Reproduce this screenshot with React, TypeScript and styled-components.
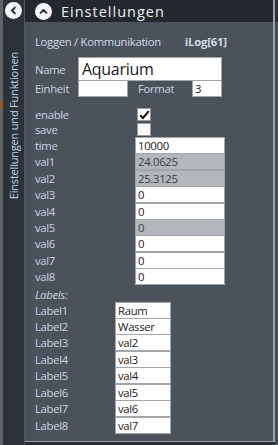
import styled, { createGlobalStyle } from "styled-components";

const GlobalStyle = createGlobalStyle`
  html, body {
    margin: 0;
    padding: 0;
    background: #2a2f35;
    overflow: hidden;
  }
  body {
    font-family: "Open Sans", "Noto Sans", sans-serif;
  }
`;

const Root = styled.div`
  display: flex;
  width: 278px;
  height: 445px;
  background: #2a2f35;
`;

const EdgeStrip = styled.div`
  width: 3px;
  background: linear-gradient(
    to bottom,
    #5f6366 0,
    #5f6366 100px,
    #8a5a2c 100px,
    #8a5a2c 110px,
    #5f6366 110px
  );
`;

const Sidebar = styled.div`
  width: 21px;
  background: #2b323a;
  border-right: 1px solid #515860;
  display: flex;
  flex-direction: column;
  align-items: center;
  padding-top: 2px;
`;

const VerticalLabel = styled.div`
  writing-mode: vertical-rl;
  transform: rotate(180deg);
  margin-top: 33px;
  font-size: 11px;
  color: #c8d6e4;
  white-space: nowrap;
  letter-spacing: -0.2px;
`;

const Circle = styled.div`
  width: 17px;
  height: 17px;
  border-radius: 50%;
  background: #f4f5f6;
  display: flex;
  align-items: center;
  justify-content: center;
  flex-shrink: 0;
`;

const Panel = styled.div`
  width: 248px;
  height: 441px;
  display: flex;
  flex-direction: column;
  background: #4b525a;
  border-right: 2px solid #9ba1a6;
  border-bottom: 1px solid #9ba1a6;
`;

const RightStrip = styled.div`
  width: 3px;
  background: linear-gradient(to bottom, #2a2f35 0, #2a2f35 22px, #474d54 22px);
`;

const Header = styled.div`
  height: 22px;
  background: #22282d;
  display: flex;
  align-items: center;
  padding-left: 10px;
  gap: 9px;
`;

const Title = styled.div`
  font-size: 14.5px;
  color: #f0f2f4;
  letter-spacing: 1px;
`;

const Body = styled.div`
  padding: 11px 0 0 10px;
  display: flex;
  flex-direction: column;
  color: #c9d5e1;
  font-size: 11.3px;
  letter-spacing: -0.3px;
`;

const TopLine = styled.div`
  display: flex;
  height: 16px;
  align-items: center;
  color: #d3dce5;
`;

const Bold = styled.span`
  font-weight: 700;
  margin-left: 24px;
  letter-spacing: -0.2px;
`;

const Row = styled.div<{ $label: number; $h: number }>`
  display: grid;
  grid-template-columns: ${(p) => p.$label}px auto;
  height: ${(p) => p.$h}px;
  align-items: center;
`;

const Field = styled.input<{ $w: number; $disabled?: boolean; $big?: boolean }>`
  box-sizing: border-box;
  width: ${(p) => p.$w}px;
  height: 100%;
  margin: 0;
  border: 1px solid #a3a6a9;
  border-radius: 0;
  padding: 0 0 0 ${(p) => (p.$big ? 3 : 2)}px;
  background: ${(p) => (p.$disabled ? "#b3b7bb" : "#ffffff")};
  color: ${(p) => (p.$disabled ? "#3a3d40" : "#1a1a1a")};
  font-family: "Open Sans", "Noto Sans", sans-serif;
  font-size: ${(p) => (p.$big ? 16 : 11.3)}px;
  outline: none;
  letter-spacing: -0.3px;
`;

const SplitRow = styled.div`
  display: flex;
  height: 17px;
  align-items: center;
`;

const InlineLabel = styled.span<{ $w: number; $gap?: number }>`
  width: ${(p) => p.$w}px;
  margin-left: ${(p) => p.$gap ?? 0}px;
  flex-shrink: 0;
`;

const Check = styled.div`
  box-sizing: border-box;
  width: 14px;
  height: 13px;
  margin-left: 1px;
  background: #ffffff;
  border: 1px solid #9a9ea2;
  display: flex;
  align-items: center;
  justify-content: center;
`;

const SectionLabel = styled.div`
  height: 15px;
  display: flex;
  align-items: center;
  font-style: italic;
  margin-top: 2px;
`;

const Spacer = styled.div<{ $h: number }>`
  height: ${(p) => p.$h}px;
`;

const Chevron = ({ dir }: { dir: "left" | "up" }) => (
  <svg width="9" height="9" viewBox="0 0 10 10">
    <path
      d={dir === "left" ? "M6.5 1.8 L3.3 5 L6.5 8.2" : "M1.8 6.5 L5 3.3 L8.2 6.5"}
      fill="none"
      stroke="#2a3037"
      strokeWidth="2.2"
      strokeLinecap="round"
      strokeLinejoin="round"
    />
  </svg>
);

const values: { name: string; value: string; disabled?: boolean }[] = [
  { name: "time", value: "10000" },
  { name: "val1", value: "24.0625", disabled: true },
  { name: "val2", value: "25.3125", disabled: true },
  { name: "val3", value: "0" },
  { name: "val4", value: "0" },
  { name: "val5", value: "0", disabled: true },
  { name: "val6", value: "0" },
  { name: "val7", value: "0" },
  { name: "val8", value: "0" },
];

const labels = ["Raum", "Wasser", "val2", "val3", "val4", "val5", "val6", "val7"];

const App = () => {
  return (
    <>
      <GlobalStyle />
      <Root>
        <EdgeStrip />
        <Sidebar>
          <Circle>
            <Chevron dir="left" />
          </Circle>
          <VerticalLabel>Einstellungen und Funktionen</VerticalLabel>
        </Sidebar>
        <Panel>
          <Header>
            <Circle>
              <Chevron dir="up" />
            </Circle>
            <Title>Einstellungen</Title>
          </Header>
          <Body>
            <TopLine>
              Loggen / Kommunikation<Bold>iLog[61]</Bold>
            </TopLine>
            <Spacer $h={8} />
            <Row $label={43} $h={23}>
              <span>Name</span>
              <Field $w={144} $big defaultValue="Aquarium" />
            </Row>
            <SplitRow>
              <InlineLabel $w={43}>Einheit</InlineLabel>
              <Field $w={50} defaultValue="" />
              <InlineLabel $w={54} $gap={10}>Format</InlineLabel>
              <Field $w={30} defaultValue="3" />
            </SplitRow>
            <Spacer $h={10} />
            <Row $label={101} $h={15}>
              <span>enable</span>
              <Check>
                <svg width="11" height="10" viewBox="0 0 11 10">
                  <path d="M1.2 5.2 L4 8 L9.8 1.2" fill="none" stroke="#111" strokeWidth="2" />
                </svg>
              </Check>
            </Row>
            <Row $label={101} $h={15}>
              <span>save</span>
              <Check />
            </Row>
            {values.map((v) => (
              <Row key={v.name} $label={100} $h={16.4}>
                <span>{v.name}</span>
                <Field $w={90} $disabled={v.disabled} defaultValue={v.value} readOnly />
              </Row>
            ))}
            <SectionLabel>Labels:</SectionLabel>
            {labels.map((l, i) => (
              <Row key={i} $label={80} $h={16.45}>
                <span>Label{i + 1}</span>
                <Field $w={56} defaultValue={l} readOnly />
              </Row>
            ))}
          </Body>
        </Panel>
        <RightStrip />
      </Root>
    </>
  );
};

export default App;
